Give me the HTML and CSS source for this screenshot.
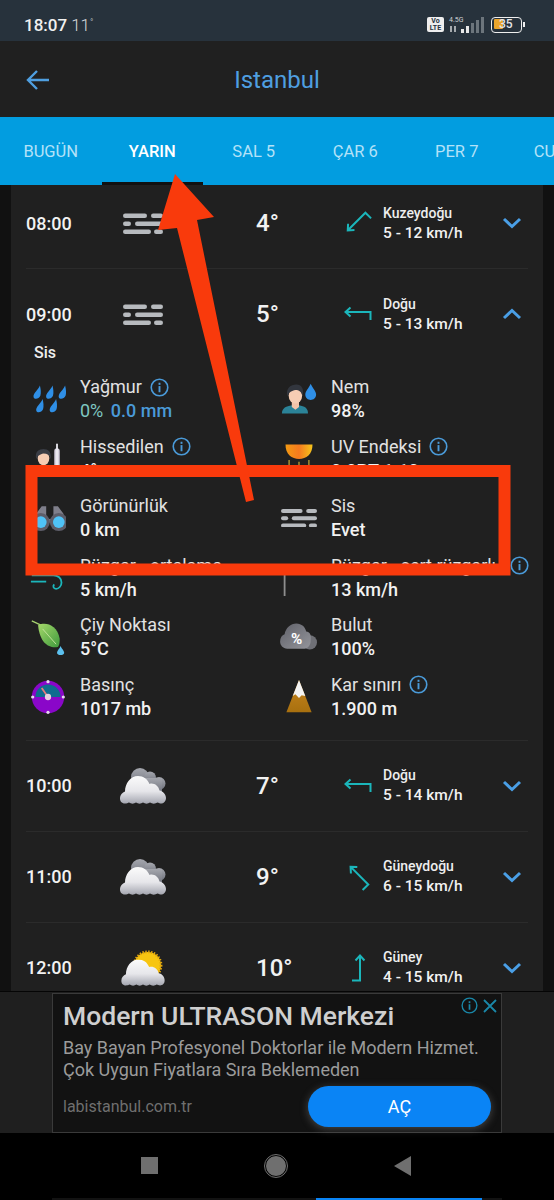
FILE: index.html
```html
<!DOCTYPE html>
<html lang="tr">
<head>
    <meta charset="UTF-8">
    <meta name="viewport" content="width=device-width, initial-scale=1.0">
    <title>Istanbul</title>
    <link rel="stylesheet" href="styles.css">
</head>
<body>
    <svg class="sprite" aria-hidden="true">
        <defs>
            <linearGradient id="cloudFront" x1="0" y1="0" x2="0" y2="1">
                <stop offset="0" stop-color="#fbfbfb"/>
                <stop offset="0.55" stop-color="#e6e6ea"/>
                <stop offset="1" stop-color="#a4a6b0"/>
            </linearGradient>
            <linearGradient id="cloudBack" x1="0" y1="0" x2="0" y2="1">
                <stop offset="0" stop-color="#a5a7ae"/>
                <stop offset="1" stop-color="#70737d"/>
            </linearGradient>
            <linearGradient id="cloudDark" x1="0" y1="0" x2="1" y2="1">
                <stop offset="0" stop-color="#5f6068"/>
                <stop offset="1" stop-color="#94959b"/>
            </linearGradient>
            <linearGradient id="uvSun" x1="0" y1="0" x2="1" y2="0">
                <stop offset="0" stop-color="#f39a12"/>
                <stop offset="0.5" stop-color="#f57a1f"/>
                <stop offset="1" stop-color="#f6c51b"/>
            </linearGradient>
            <linearGradient id="leafFill" x1="0" y1="0" x2="1" y2="1">
                <stop offset="0" stop-color="#a5d86a"/>
                <stop offset="1" stop-color="#3f9a3d"/>
            </linearGradient>
            <linearGradient id="rock" x1="0" y1="0" x2="0" y2="1">
                <stop offset="0" stop-color="#c9861f"/>
                <stop offset="1" stop-color="#a8700f"/>
            </linearGradient>
        </defs>
        <symbol id="fog" viewBox="0 0 40 20">
            <g fill="#b7babe">
                <rect x="0" y="0" width="24" height="4.4" rx="2.2"/>
                <rect x="28" y="0" width="12" height="4.4" rx="2.2"/>
                <rect x="0" y="8" width="8" height="4.4" rx="2.2"/>
                <rect x="12" y="8" width="28" height="4.4" rx="2.2"/>
                <rect x="0" y="16" width="28" height="4.4" rx="2.2"/>
                <rect x="31" y="16" width="9" height="4.4" rx="2.2"/>
            </g>
        </symbol>
        <symbol id="wind-arrow" viewBox="-15 -15 30 30">
            <path d="M-12 -2H12.500V6M-7.500 -6.500L-12.500 -2L-7.500 2.500" fill="none" stroke="#1bb6bb" stroke-width="2"/>
        </symbol>
        <symbol id="chevron" viewBox="0 0 20 12">
            <path d="M2 2L10 9.500L18 2" fill="none" stroke="#4a9fe6" stroke-width="3"/>
        </symbol>
        <symbol id="info" viewBox="0 0 20 20">
            <circle cx="10" cy="10" r="8.700" fill="none" stroke="#4a9ad8" stroke-width="1.700"/>
            <rect x="9" y="8.500" width="2" height="6.500" fill="#4a9ad8"/>
            <rect x="9" y="5" width="2" height="2.200" fill="#4a9ad8"/>
        </symbol>
        <symbol id="cloud-front" viewBox="0 0 46 28">
            <g fill="url(#cloudFront)">
                <path d="M5 27.500C1.500 27.500 0 25 0 22.500C0 19 2.500 16.500 5 15.500C5 7.500 10.500 0 18 0C23.500 0 27.500 3 29.500 8C33.500 6.500 38.500 9.500 39.500 14.500C43 15 46 18.500 46 22C46 25.500 43.500 27.500 41 27.500C39.500 27.500 38.500 26.800 37.500 26.500C35.500 28 32 28 30 26.500C28 28 25 28 23 26.500C21 28 18 28 16 26.500C14 28 11 28 9 26.500C8 27 6.500 27.500 5 27.500Z"/>
            </g>
        </symbol>
        <symbol id="cloud" viewBox="0 0 46 36">
            <g fill="url(#cloudBack)">
                <circle cx="20" cy="9" r="9"/>
                <circle cx="30" cy="9.500" r="6"/>
                <circle cx="39" cy="15.500" r="6.500"/>
                <rect x="18" y="10" width="24" height="14"/>
            </g>
            <use href="#cloud-front" x="0" y="8" width="46" height="28"/>
        </symbol>
        <symbol id="cloud-sun" viewBox="0 0 46 38">
            <circle cx="28" cy="16" r="14" fill="#f7c511" stroke="#e5a80c" stroke-width="3" stroke-dasharray="1.500 1.500"/>
            <use href="#cloud-front" x="0" y="10" width="46" height="28"/>
        </symbol>
    </svg>

    <div class="phone">
        <div class="status-bar">
            <div class="status-left"><span class="clock">18:07</span><span class="temp-now">11<sup class="deg">°</sup></span></div>
            <div class="status-right">
                <span class="volte">Vo<br>LTE</span>
                <div class="net">
                    <span class="net-label">4.5G</span>
                    <svg class="net-arrows" viewBox="0 0 8 8" width="8" height="8"><path d="M2 1V7M6 1V7" stroke="#cfd2d4" stroke-width="1.500"/></svg>
                </div>
                <div class="bars">
                    <i class="bar b1"></i><i class="bar b2"></i><i class="bar b3 off"></i><i class="bar b4 off"></i><i class="bar b5 off"></i>
                </div>
                <div class="battery"><span class="battery-fill"></span><span class="battery-num">35</span></div>
                <span class="battery-nub"></span>
            </div>
        </div>

        <header class="top-bar">
            <svg class="back" viewBox="0 0 24 22" width="24" height="22"><path d="M23 11H2M11 2L2 11L11 20" fill="none" stroke="#4f9fe0" stroke-width="2.400"/></svg>
            <h1 class="city">Istanbul</h1>
        </header>

        <nav class="tabs">
            <div class="tab">BUGÜN</div>
            <div class="tab active">YARIN</div>
            <div class="tab">SAL 5</div>
            <div class="tab">ÇAR 6</div>
            <div class="tab">PER 7</div>
            <div class="tab">CUM 8</div>
        </nav>

        <main class="list-wrap">
            <div class="list">
                <section class="hour first">
                    <div class="hour-head">
                        <div class="time">08:00</div>
                        <svg class="sky fog"><use href="#fog"/></svg>
                        <div class="temp">4°</div>
                        <svg class="arrow ne"><use href="#wind-arrow"/></svg>
                        <div class="wind"><div class="wind-dir">Kuzeydoğu</div><div class="wind-speed">5 - 12 km/h</div></div>
                        <svg class="chev"><use href="#chevron"/></svg>
                    </div>
                </section>

                <section class="hour open">
                    <div class="hour-head">
                        <div class="time">09:00</div>
                        <svg class="sky fog"><use href="#fog"/></svg>
                        <div class="temp">5°</div>
                        <svg class="arrow"><use href="#wind-arrow"/></svg>
                        <div class="wind"><div class="wind-dir">Doğu</div><div class="wind-speed">5 - 13 km/h</div></div>
                        <svg class="chev up"><use href="#chevron"/></svg>
                    </div>
                    <div class="sky-name">Sis</div>
                    <div class="details">
                        <div class="item">
                            <svg class="item-icon" viewBox="0 0 40 40">
                                <g fill="#2f8fe6">
                                    <path d="M11 5C9 10 3 14 4 18C5 21 10 20 11.500 16.500C12.500 13 12 9 11 5Z"/>
                                    <path d="M25 5C23 10 17 14 18 18C19 21 24 20 25.500 16.500C26.500 13 26 9 25 5Z"/>
                                    <path d="M39 5C37 10 31 14 32 18C33 21 38 20 39.500 16.500C40.500 13 40 9 39 5Z"/>
                                    <path d="M14 20C12 25 6 29 7 33C8 36 13 35 14.500 31.500C15.500 28 15 24 14 20Z"/>
                                    <path d="M29 20C27 25 21 29 22 33C23 36 28 35 29.500 31.500C30.500 28 30 24 29 20Z"/>
                                </g>
                            </svg>
                            <div class="item-text">
                                <div class="label">Yağmur <svg class="info"><use href="#info"/></svg></div>
                                <div class="value"><span class="pct">0%</span> <span class="mm">0.0 mm</span></div>
                            </div>
                        </div>
                        <div class="item">
                            <svg class="item-icon" viewBox="0 0 40 40">
                                <path d="M1 36C1 30 6 28 12 27H20C26 28 30 30 30 36Z" fill="#2b8398"/>
                                <path d="M12 22H20V29L16 32L12 29Z" fill="#f3c3a8"/>
                                <ellipse cx="16" cy="16" rx="7.500" ry="9" fill="#f6cdb4"/>
                                <path d="M7 17C5 8 11 4 17 4C23 4 26 9 24 17C23 12 20 10 16 10C12 11 9 12 7 17Z" fill="#32363e"/>
                                <path d="M33 3C31 8 27 11 27 15C27 19 30 21 33 21C36 21 39 19 39 15C39 11 35 8 33 3Z" fill="#2f8fe6"/>
                            </svg>
                            <div class="item-text">
                                <div class="label">Nem</div>
                                <div class="value">98%</div>
                            </div>
                        </div>
                        <div class="item">
                            <svg class="item-icon" viewBox="0 0 40 40">
                                <path d="M5 34C5 30 9 28 13 28H19C23 28 26 30 26 34V40H5Z" fill="#e6e6e6"/>
                                <ellipse cx="15" cy="19" rx="6.500" ry="8" fill="#f6cdb4"/>
                                <path d="M7 20C5 12 10 9 15 9C20 9 24 12 23 20C22 16 19 14 15 14C11 15 9 16 7 20Z" fill="#3a3d45"/>
                                <rect x="27" y="8" width="6" height="30" rx="3" fill="#d9d3e2"/>
                                <rect x="29" y="3" width="2" height="24" fill="#eceaf1"/>
                            </svg>
                            <div class="item-text">
                                <div class="label">Hissedilen <svg class="info"><use href="#info"/></svg></div>
                                <div class="value">4°</div>
                            </div>
                        </div>
                        <div class="item">
                            <svg class="item-icon" viewBox="0 0 40 40">
                                <path d="M5 4H35C35 15 28 20 20 20C12 20 5 15 5 4Z" fill="url(#uvSun)"/>
                                <path d="M9 21V38M20 23V38M31 21V38" stroke="#b79a33" stroke-width="1.500"/>
                            </svg>
                            <div class="item-text">
                                <div class="label">UV Endeksi <svg class="info"><use href="#info"/></svg></div>
                                <div class="value">0.0PT 1.10</div>
                            </div>
                        </div>
                        <div class="item">
                            <svg class="item-icon" viewBox="0 0 40 40">
                                <path d="M7 15L13 7H18V21H26V7H31L37 15L40 25H4Z" fill="#7f7f8b"/>
                                <circle cx="12" cy="24.500" r="10" fill="#5d5d69"/>
                                <circle cx="32" cy="24.500" r="10" fill="#5d5d69"/>
                                <circle cx="12" cy="24.500" r="6.500" fill="#4fc3f7"/>
                                <circle cx="32" cy="24.500" r="6.500" fill="#4fc3f7"/>
                            </svg>
                            <div class="item-text">
                                <div class="label">Görünürlük</div>
                                <div class="value">0 km</div>
                            </div>
                        </div>
                        <div class="item">
                            <svg class="item-icon fog-small" viewBox="0 0 40 20"><use href="#fog"/></svg>
                            <div class="item-text">
                                <div class="label">Sis</div>
                                <div class="value">Evet</div>
                            </div>
                        </div>
                        <div class="item">
                            <svg class="item-icon" viewBox="0 0 40 40">
                                <path d="M1 24H18" stroke="#1bb6bb" stroke-width="2"/>
                                <path d="M2 17H26C31 17 35 20 35 25C35 29 32 32 29 32C26 32 25 29 27 27" fill="none" stroke="#1bb6bb" stroke-width="2"/>
                            </svg>
                            <div class="item-text">
                                <div class="label">Rüzgar - ortalama</div>
                                <div class="value">5 km/h</div>
                            </div>
                        </div>
                        <div class="item">
                            <svg class="item-icon" viewBox="0 0 40 40">
                                <rect x="3" y="6" width="2" height="34" fill="#8e8e8e"/>
                                <path d="M5 7H22L18 11H5Z" fill="#d9534f"/>
                            </svg>
                            <div class="item-text">
                                <div class="label nowrap">Rüzgar - sert rüzgarlı <svg class="info"><use href="#info"/></svg></div>
                                <div class="value">13 km/h</div>
                            </div>
                        </div>
                        <div class="item">
                            <svg class="item-icon" viewBox="0 0 40 40">
                                <path d="M2 2L17 9" stroke="#a7d36f" stroke-width="1.500"/>
                                <path d="M9 7C17 3 30 6 33 22C33 28 32 30 31 31C22 33 11 28 9 7Z" fill="url(#leafFill)"/>
                                <path d="M14 11L29 28" stroke="#c8e6a0" stroke-width="1"/>
                                <path d="M34 30C33 33 30 35 30 37.500C30 39.500 32 40 34 40C36 40 38 39.500 38 37.500C38 35 35 33 34 30Z" fill="#5cc0ee"/>
                            </svg>
                            <div class="item-text">
                                <div class="label">Çiy Noktası</div>
                                <div class="value">5°C</div>
                            </div>
                        </div>
                        <div class="item">
                            <svg class="item-icon cloud-icon" viewBox="0 0 42 40">
                                <circle cx="33" cy="26" r="8" fill="#6f7076"/>
                                <path d="M8 33C3 33 0 29 0 25C0 21 2 18 5 17C6 10 12 5 18 5C24 5 28 9 29 14C33 14 35 18 34 24C34 29 31 33 27 33Z" fill="url(#cloudDark)"/>
                                <text x="12" y="28" class="cloud-pct">%</text>
                            </svg>
                            <div class="item-text">
                                <div class="label">Bulut</div>
                                <div class="value">100%</div>
                            </div>
                        </div>
                        <div class="item">
                            <svg class="item-icon" viewBox="0 0 40 40">
                                <circle cx="20" cy="20" r="18" fill="#8a07c9"/>
                                <path d="M6 20A14 14 0 0 1 34 20Z" fill="#0f6c8f"/>
                                <circle cx="20" cy="3" r="1.800" fill="#e6d8ef"/>
                                <circle cx="20" cy="37" r="1.800" fill="#e6d8ef"/>
                                <circle cx="3" cy="20" r="1.800" fill="#e6d8ef"/>
                                <circle cx="37" cy="20" r="1.800" fill="#e6d8ef"/>
                                <path d="M20 20L13 10" stroke="#e77b7b" stroke-width="2"/>
                                <circle cx="20" cy="20" r="3.500" fill="#e7cfe0"/>
                            </svg>
                            <div class="item-text">
                                <div class="label">Basınç</div>
                                <div class="value">1017 mb</div>
                            </div>
                        </div>
                        <div class="item">
                            <svg class="item-icon" viewBox="0 0 40 40">
                                <path d="M20 1L34 37H6Z" fill="url(#rock)"/>
                                <path d="M20 1L27 19L23 18L20 21L16 17L13 19Z" fill="#f4f4f4"/>
                            </svg>
                            <div class="item-text">
                                <div class="label">Kar sınırı <svg class="info"><use href="#info"/></svg></div>
                                <div class="value">1.900 m</div>
                            </div>
                        </div>
                    </div>
                </section>

                <section class="hour">
                    <div class="hour-head">
                        <div class="time">10:00</div>
                        <svg class="sky"><use href="#cloud"/></svg>
                        <div class="temp">7°</div>
                        <svg class="arrow"><use href="#wind-arrow"/></svg>
                        <div class="wind"><div class="wind-dir">Doğu</div><div class="wind-speed">5 - 14 km/h</div></div>
                        <svg class="chev"><use href="#chevron"/></svg>
                    </div>
                </section>

                <section class="hour">
                    <div class="hour-head">
                        <div class="time">11:00</div>
                        <svg class="sky"><use href="#cloud"/></svg>
                        <div class="temp">9°</div>
                        <svg class="arrow se"><use href="#wind-arrow"/></svg>
                        <div class="wind"><div class="wind-dir">Güneydoğu</div><div class="wind-speed">6 - 15 km/h</div></div>
                        <svg class="chev"><use href="#chevron"/></svg>
                    </div>
                </section>

                <section class="hour">
                    <div class="hour-head">
                        <div class="time">12:00</div>
                        <svg class="sky"><use href="#cloud-sun"/></svg>
                        <div class="temp">10°</div>
                        <svg class="arrow s"><use href="#wind-arrow"/></svg>
                        <div class="wind"><div class="wind-dir">Güney</div><div class="wind-speed">4 - 15 km/h</div></div>
                        <svg class="chev"><use href="#chevron"/></svg>
                    </div>
                </section>
            </div>
        </main>

        <aside class="ad-area">
            <div class="ad">
                <div class="ad-flags">
                    <svg viewBox="0 0 20 20" width="17" height="17"><circle cx="10" cy="10" r="8.700" fill="none" stroke="#1a87a8" stroke-width="1.600"/><rect x="9" y="8.500" width="2" height="6.500" fill="#1a87a8"/><rect x="9" y="5" width="2" height="2.200" fill="#1a87a8"/></svg>
                    <svg viewBox="0 0 14 14" width="14" height="14"><path d="M1 1L13 13M13 1L1 13" stroke="#1a87a8" stroke-width="1.800"/></svg>
                </div>
                <div class="ad-title">Modern ULTRASON Merkezi</div>
                <div class="ad-desc">Bay Bayan Profesyonel Doktorlar ile Modern Hizmet.<br>Çok Uygun Fiyatlara Sıra Beklemeden</div>
                <div class="ad-foot">
                    <span class="ad-url">labistanbul.com.tr</span>
                    <span class="ad-btn">AÇ</span>
                </div>
            </div>
        </aside>

        <div class="nav-bar">
            <span class="nav-square"></span>
            <span class="nav-circle"></span>
            <svg viewBox="0 0 17 20" width="17" height="20"><path d="M17 0V20L0 10Z" fill="#6f6f6f"/></svg>
        </div>
        <div class="sliver"><span class="sliver-btn"></span></div>
    </div>

    <!-- red marks drawn on top of the screenshot -->
    <svg class="marks" viewBox="0 0 554 1200">
        <rect x="31.500" y="471" width="473" height="98.500" fill="none" stroke="#f93a0c" stroke-width="12"/>
        <polygon points="175,174 214,217 197,220 254,500 246,502 177,228 158,230" fill="#f93a0c"/>
    </svg>
</body>
</html>
```
FILE: styles.css
```css
* {
    box-sizing: border-box;
}
body {
    margin: 0;
    background: #000;
    font-family: Roboto, "Noto Sans", sans-serif;
    color: #eee;
}
.sprite {
    position: absolute;
    width: 0;
    height: 0;
}
.phone {
    width: 554px;
    height: 1200px;
    display: flex;
    flex-direction: column;
    overflow: hidden;
}

/* status bar */
.status-bar {
    height: 41px;
    background: #27323c;
    display: flex;
    align-items: center;
    justify-content: space-between;
    padding: 8px 29px 0 24px;
    flex-shrink: 0;
}
.clock {
    font-size: 17px;
    font-weight: 500;
    color: #f0f0f0;
}
.temp-now {
    font-size: 17px;
    font-weight: 300;
    margin-left: 4px;
    color: #d5d8da;
}
.deg {
    font-size: 9px;
    line-height: 0;
    vertical-align: 6px;
}
.status-right {
    display: flex;
    align-items: center;
}
.volte {
    width: 17px;
    height: 15px;
    background: #eee;
    color: #27323c;
    border-radius: 2px;
    font-size: 7px;
    line-height: 7px;
    font-weight: 700;
    text-align: center;
    padding-top: 1px;
}
.net {
    display: flex;
    flex-direction: column;
    margin-left: 5px;
    width: 22px;
    height: 18px;
}
.net-label {
    font-size: 7px;
    line-height: 9px;
    color: #cfd2d4;
}
.bars {
    display: flex;
    align-items: flex-end;
    gap: 2px;
    height: 17px;
    margin-left: -10px;
}
.bar {
    width: 3px;
    background: #e8e8e8;
}
.bar.off {
    background: #6c757c;
}
.b1 { height: 4px; }
.b2 { height: 7px; }
.b3 { height: 10px; }
.b4 { height: 13px; }
.b5 { height: 16px; }
.battery {
    position: relative;
    width: 31px;
    height: 16px;
    margin-left: 7px;
    border: 1.5px solid #eee;
    border-radius: 4px;
    padding: 1.5px;
}
.battery-fill {
    display: block;
    width: 9px;
    height: 10px;
    background: #eba52c;
    border-radius: 1px;
}
.battery-num {
    position: absolute;
    left: 7px;
    top: 0;
    font-size: 12px;
    line-height: 13px;
    font-weight: 500;
    color: #e8e8e8;
}
.battery-nub {
    width: 2px;
    height: 5px;
    background: #eee;
    margin-left: 1px;
}

/* header and tabs */
.top-bar {
    height: 76px;
    background: #202020;
    position: relative;
    display: flex;
    align-items: center;
    justify-content: center;
    padding-top: 2px;
    flex-shrink: 0;
}
.back {
    position: absolute;
    left: 26px;
    top: 28px;
}
.city {
    margin: 0;
    font-size: 24px;
    font-weight: 400;
    color: #4f9fe0;
}
.tabs {
    height: 68px;
    background: #029de0;
    display: flex;
    flex-shrink: 0;
    overflow: hidden;
}
.tab {
    width: 101.500px;
    flex-shrink: 0;
    font-size: 16.500px;
    color: #b4e2f8;
    text-align: center;
    line-height: 70px;
    border-bottom: 3px solid transparent;
}
.tab.active {
    color: #fff;
    font-weight: 500;
    border-bottom-color: #111;
}

/* hourly list */
.list-wrap {
    flex: 1;
    min-height: 0;
    background: #111;
    padding: 0 11px;
    overflow: hidden;
    border-bottom: 1px solid #050505;
}
.list {
    background: #202020;
    padding: 0 15px;
}
.hour {
    padding: 16px 0;
    border-bottom: 1px solid #2b2b2b;
}
.hour.first {
    padding-top: 9px;
}
.hour.open {
    padding-bottom: 19px;
}
.hour-head {
    height: 58px;
    display: grid;
    grid-template-columns: 96px 134px 87px 40px 119px 20px;
    align-items: center;
}
.time {
    font-size: 18px;
    font-weight: 500;
    color: #f2f2f2;
}
.sky {
    width: 46px;
    height: 36px;
    margin-left: -2px;
}
.sky.fog {
    width: 40px;
    height: 21px;
    margin-left: 1px;
}
.temp {
    font-size: 24px;
    font-weight: 500;
    color: #f2f2f2;
}
.arrow {
    width: 30px;
    height: 30px;
}
.arrow.ne {
    transform: rotate(-45deg);
}
.arrow.se {
    transform: rotate(45deg);
}
.arrow.s {
    transform: rotate(90deg);
}
.wind-dir {
    font-size: 14px;
    line-height: 20px;
    font-weight: 500;
    color: #eee;
}
.wind-speed {
    font-size: 15.500px;
    line-height: 21px;
    font-weight: 500;
    color: #f2f2f2;
}
.chev {
    width: 20px;
    height: 12px;
}
.chev.up {
    transform: rotate(180deg);
}

/* opened hour */
.sky-name {
    font-size: 16px;
    line-height: 20px;
    font-weight: 500;
    color: #eee;
    padding-left: 8px;
}
.details {
    display: grid;
    grid-template-columns: 251px 1fr;
    row-gap: 11.600px;
    margin-top: 12px;
}
.item {
    display: flex;
    align-items: center;
    height: 48px;
    padding-left: 4px;
}
.item-icon {
    width: 36px;
    height: 36px;
    flex-shrink: 0;
}
.item-icon.fog-small {
    height: 18px;
}
.item-icon.cloud-icon {
    width: 38px;
    margin-left: -1px;
    margin-right: -1px;
}
.item-text {
    margin-left: 14px;
    min-width: 0;
}
.label {
    font-size: 18px;
    line-height: 24px;
    color: #e2e2e2;
    display: flex;
    align-items: center;
    gap: 8px;
}
.label.nowrap {
    white-space: nowrap;
    gap: 14px;
}
.value {
    font-size: 18px;
    line-height: 24px;
    font-weight: 500;
    color: #f2f2f2;
}
.pct {
    color: #7fc6c0;
    font-weight: 400;
}
.mm {
    color: #4a9ad8;
    margin-left: 3px;
}
.info {
    width: 19px;
    height: 19px;
    flex-shrink: 0;
}
.cloud-pct {
    font-family: Roboto, sans-serif;
    font-size: 17px;
    font-weight: 700;
    fill: #fff;
}

/* ad */
.ad-area {
    height: 141px;
    background: #1f1f1f;
    padding: 1px 52px 0;
    flex-shrink: 0;
}
.ad {
    position: relative;
    height: 140px;
    background: #121212;
    border: 1px solid #3a3a3a;
    padding: 6px 10px 0;
}
.ad-flags {
    position: absolute;
    top: 3px;
    right: 4px;
    display: flex;
    align-items: center;
    gap: 5px;
}
.ad-title {
    font-size: 26.500px;
    line-height: 32px;
    font-weight: 500;
    color: #cfcfcf;
}
.ad-desc {
    font-size: 18px;
    line-height: 22px;
    color: #9b9b9b;
    margin-top: 5px;
}
.ad-foot {
    display: flex;
    align-items: center;
    justify-content: space-between;
    margin-top: 5px;
}
.ad-url {
    font-size: 16px;
    color: #6f6f6f;
}
.ad-btn {
    width: 183px;
    height: 41px;
    border-radius: 21px;
    background: #0a84f5;
    color: #fff;
    font-size: 18px;
    line-height: 41px;
    text-align: center;
    box-shadow: 0 2px 8px rgba(170, 170, 170, 0.35);
}

/* android nav */
.nav-bar {
    height: 65px;
    background: #000;
    display: flex;
    align-items: center;
    justify-content: space-between;
    padding: 0 143px 0 141px;
    flex-shrink: 0;
}
.nav-square {
    width: 17px;
    height: 17px;
    background: #6f6f6f;
}
.nav-circle {
    width: 22px;
    height: 22px;
    border-radius: 50%;
    background: #6f6f6f;
    border: 1.500px solid #000;
    outline: 1.500px solid #6f6f6f;
}
.sliver {
    height: 2px;
    background: #121212;
    margin: 0 52px;
    padding-left: 264px;
    flex-shrink: 0;
}
.sliver-btn {
    display: block;
    width: 166px;
    height: 2px;
    background: #0a84f5;
}

/* annotation layer */
.marks {
    position: absolute;
    left: 0;
    top: 0;
    width: 554px;
    height: 1200px;
    pointer-events: none;
}
```
